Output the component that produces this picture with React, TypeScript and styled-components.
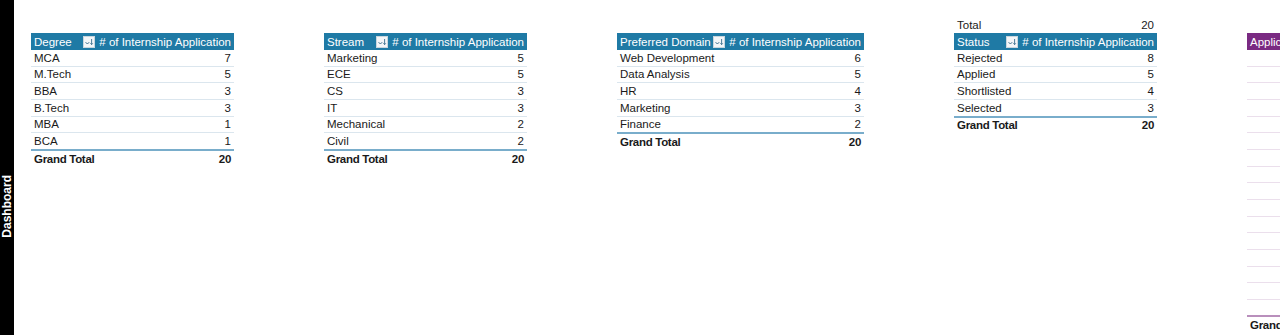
import React from "react";
import styled, { createGlobalStyle } from "styled-components";

const GlobalStyle = createGlobalStyle`
  html, body { margin: 0; padding: 0; background: #ffffff; }
  body { width: 1280px; height: 335px; overflow: hidden; font-family: "Liberation Sans", Arial, sans-serif; }
`;

const ROW = 16.667;

const Page = styled.div`
  display: flex;
  width: 1280px;
  height: 335px;
  overflow: hidden;
  background: #fff;
`;

const Sidebar = styled.div`
  flex: 0 0 14px;
  height: 335px;
  background: #000;
  display: flex;
  flex-direction: column;
  align-items: center;
  padding-top: 175px;
  box-sizing: border-box;
`;

const SidebarLabel = styled.span`
  writing-mode: vertical-rl;
  transform: rotate(180deg);
  color: #fff;
  font-family: "Liberation Sans", Arial, sans-serif;
  font-weight: 700;
  font-size: 12px;
  line-height: 12px;
`;

const Content = styled.div`
  display: flex;
  align-items: flex-start;
  gap: 90px;
  padding: ${ROW}px 0 0 17px;
  flex: 1;
  min-width: 0;
  overflow: hidden;
`;

const Block = styled.div<{ $w: number }>`
  flex: 0 0 ${(p) => p.$w}px;
  width: ${(p) => p.$w}px;
  display: flex;
  flex-direction: column;
  font-size: 11.5px;
  color: #1a1a1a;
  white-space: nowrap;
  overflow: hidden;
`;

const Row = styled.div`
  height: ${ROW}px;
  display: flex;
  align-items: center;
  justify-content: space-between;
  box-sizing: border-box;
  padding: 0 3px 0 3px;
`;

const PreRow = styled(Row)``;

const HeaderRow = styled.div<{ $bg: string }>`
  height: ${ROW}px;
  display: flex;
  align-items: center;
  background: ${(p) => p.$bg};
  color: #fff;
  overflow: hidden;
`;

const HeaderLabel = styled.div<{ $w: number }>`
  flex: 0 0 ${(p) => p.$w}px;
  display: flex;
  align-items: center;
  justify-content: space-between;
  padding: 0 2px 0 3px;
  box-sizing: border-box;
`;

const HeaderValue = styled.div`
  flex: 1;
  text-align: right;
  padding-right: 3px;
`;

const SortButton = styled.svg`
  display: block;
  width: 12px;
  height: 12px;
  flex: 0 0 12px;
`;

const DataRow = styled(Row)<{ $line: string }>`
  border-bottom: 1px solid ${(p) => p.$line};
`;

const TotalRow = styled(Row)<{ $rule: string }>`
  font-weight: 700;
  letter-spacing: -0.3px;
  border-top: 2px solid ${(p) => p.$rule};
  height: ${ROW + 1}px;
  margin-top: -1px;
`;

type Item = [string, number];

const SortIcon = () => (
  <SortButton viewBox="0 0 12 12">
    <rect x="0.5" y="0.5" width="11" height="11" fill="#f4f6f8" stroke="#c9d6de" />
    <path d="M2.6 6.2 L4.4 8 L6.2 6.2" fill="none" stroke="#3a6d8c" strokeWidth="1" />
    <path d="M8.6 3 V8.6 M7.4 7.3 L8.6 8.6 L9.8 7.3" fill="none" stroke="#3a6d8c" strokeWidth="0.9" />
  </SortButton>
);

const Pivot: React.FC<{
  title: string;
  items: Item[];
  width: number;
  labelWidth: number;
  pre?: Item;
}> = ({ title, items, width, labelWidth, pre }) => {
  const total = items.reduce((s, [, v]) => s + v, 0);
  return (
    <Block $w={width}>
      <PreRow>
        {pre ? (
          <>
            <span>{pre[0]}</span>
            <span>{pre[1]}</span>
          </>
        ) : null}
      </PreRow>
      <HeaderRow $bg="#1f7aa5">
        <HeaderLabel $w={labelWidth}>
          <span>{title}</span>
          <SortIcon />
        </HeaderLabel>
        <HeaderValue># of Internship Application</HeaderValue>
      </HeaderRow>
      {items.map(([k, v]) => (
        <DataRow key={k} $line="#dbe6ee">
          <span>{k}</span>
          <span>{v}</span>
        </DataRow>
      ))}
      <TotalRow $rule="#79adcb">
        <span>Grand Total</span>
        <span>{total}</span>
      </TotalRow>
    </Block>
  );
};

const PurpleHeader = styled(HeaderRow)`
  padding-left: 3px;
`;

const DatePivot: React.FC = () => (
  <Block $w={200}>
    <PreRow />
    <PurpleHeader $bg="#7a2a82">Application Date</PurpleHeader>
    {Array.from({ length: 16 }).map((_, i) => (
      <DataRow key={i} $line="#ebdfec" />
    ))}
    <TotalRow $rule="#b98fbc">
      <span>Grand Total</span>
      <span>20</span>
    </TotalRow>
  </Block>
);

export default function App() {
  return (
    <>
      <GlobalStyle />
      <Page>
        <Sidebar>
          <SidebarLabel>Dashboard</SidebarLabel>
        </Sidebar>
        <Content>
          <Pivot
            title="Degree"
            width={203}
            labelWidth={66}
            items={[
              ["MCA", 7],
              ["M.Tech", 5],
              ["BBA", 3],
              ["B.Tech", 3],
              ["MBA", 1],
              ["BCA", 1],
            ]}
          />
          <Pivot
            title="Stream"
            width={203}
            labelWidth={66}
            items={[
              ["Marketing", 5],
              ["ECE", 5],
              ["CS", 3],
              ["IT", 3],
              ["Mechanical", 2],
              ["Civil", 2],
            ]}
          />
          <Pivot
            title="Preferred Domain"
            width={247}
            labelWidth={110}
            items={[
              ["Web Development", 6],
              ["Data Analysis", 5],
              ["HR", 4],
              ["Marketing", 3],
              ["Finance", 2],
            ]}
          />
          <Pivot
            title="Status"
            width={203}
            labelWidth={66}
            pre={["Total", 20]}
            items={[
              ["Rejected", 8],
              ["Applied", 5],
              ["Shortlisted", 4],
              ["Selected", 3],
            ]}
          />
          <DatePivot />
        </Content>
      </Page>
    </>
  );
}
